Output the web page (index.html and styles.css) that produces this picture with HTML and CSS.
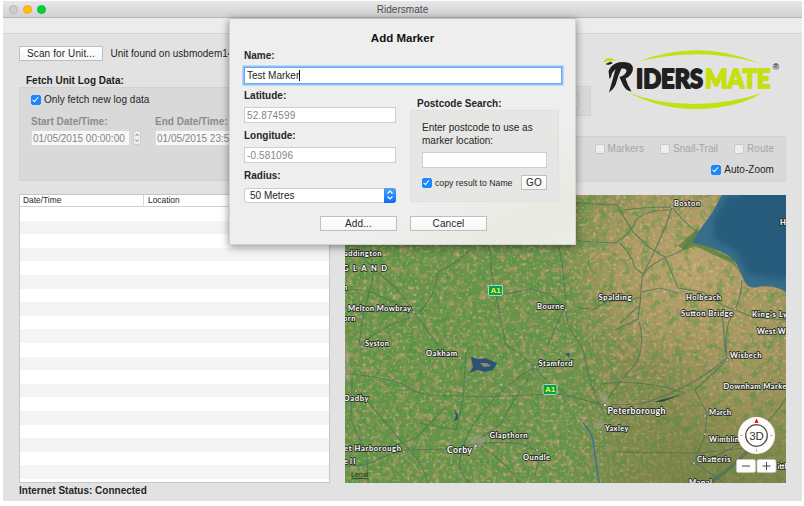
FILE: index.html
```html
<!DOCTYPE html>
<html lang="en">
<head>
<meta charset="utf-8">
<title>Ridersmate</title>
<link rel="stylesheet" href="styles.css">
</head>
<body>
<div class="window">
  <header class="titlebar">
    <div class="lights"><i class="light"></i><i class="light amber"></i><i class="light green"></i></div>
    <span>Ridersmate</span>
  </header>
  <div class="toolbar"></div>
  <main class="content">
    <section class="left">
      <div class="scan"><button class="btn scan-btn">Scan for Unit...</button><span>Unit found on usbmodem1411</span></div>
      <h2 class="group-title">Fetch Unit Log Data:</h2>
      <div class="panel fetch">
        <label class="check"><i class="box on"></i>Only fetch new log data</label>
        <div class="dates">
          <div class="date"><b>Start Date/Time:</b><div class="date-row"><span class="field">01/05/2015 00:00:00</span><i class="stepper"><svg viewBox="0 0 8 14"><path d="M1.500 5 3 3l1.500 2M1.500 8.500 3 10.500l1.500-2"/></svg></i></div></div>
          <div class="date"><b>End Date/Time:</b><div class="date-row"><span class="field">01/05/2015 23:59:59</span><i class="stepper"></i></div></div>
        </div>
      </div>
      <div class="table">
        <div class="thead"><span>Date/Time</span><span>Location</span></div>
        <div class="rows"></div>
      </div>
      <footer class="status">Internet Status: Connected</footer>
    </section>
    <section class="right">
      <div class="brand">
        <div class="panel mini"><i></i></div>
        <svg class="logo" viewBox="600 40 186 75">
          <g fill="#c4df12">
            <path d="M637 62Q698 38 759 63Q698 46 637 62Z"/>
            <path d="M628 92.500Q642 98 658 101Q710 110 762 93Q745 104 718 107.500Q670 114 628 92.500Z"/>
            <path d="M603.500 62.500Q604 59 608 58Q613 57.500 616 60.500Q610 60 603.500 62.500Z"/>
          </g>
          <g fill="#211f20">
            <path d="M605.500 64L611 61.500L612.500 63.500L608 65Z"/>
            <path d="M608.500 71Q611.500 64 619 62.300Q632 60.500 633 68Q633 75 625.500 78.500Q627.500 85 631.500 91.500Q625.500 90.500 623 85L619.500 77Q625.500 75.500 626.500 71Q626.500 68 621.500 68.500L618.500 75.500L615.500 85Q613.500 89.500 609 92.500Q611 85 612.500 80L615.500 69Q612 72 611 77L609.500 79Z"/>
          </g>
          <text class="word dark" x="636" y="87.500" textLength="67" lengthAdjust="spacingAndGlyphs">IDERS</text>
          <text class="word lime" x="705" y="87.500" textLength="65.500" lengthAdjust="spacingAndGlyphs">MATE</text>
          <text class="reg" x="772.800" y="69.500">®</text>
        </svg>
      </div>
      <div class="panel layers">
        <div class="layer-row off"><label class="check"><i class="box"></i>Markers</label><label class="check"><i class="box"></i>Snail-Trail</label><label class="check"><i class="box"></i>Route</label></div>
        <div class="layer-row"><label class="check"><i class="box on"></i>Auto-Zoom</label></div>
      </div>
      <svg class="map" viewBox="345 195 441 288">
        <defs>
          <linearGradient id="east" x1="345" x2="786" y1="340" y2="310" gradientUnits="userSpaceOnUse">
            <stop offset="0" stop-color="#669348"/><stop offset=".5" stop-color="#6b924b"/><stop offset=".62" stop-color="#838c51"/><stop offset="1" stop-color="#958f5a"/>
          </linearGradient>
          <linearGradient id="south" x1="0" x2="0" y1="0" y2="1">
            <stop offset=".5" stop-color="#6c7c3e" stop-opacity="0"/><stop offset="1" stop-color="#6c7c3e" stop-opacity=".6"/>
          </linearGradient>
          <linearGradient id="southfade"><stop offset="0" stop-color="#fff" stop-opacity="0"/><stop offset=".5" stop-color="#fff"/></linearGradient>
          <mask id="se"><rect x="570" y="195" width="216" height="288" fill="url(#southfade)"/></mask>
          <radialGradient id="fen"><stop offset="0" stop-color="#c3a772" stop-opacity=".9"/><stop offset=".6" stop-color="#b79f68" stop-opacity=".6"/><stop offset="1" stop-color="#b79c67" stop-opacity="0"/></radialGradient>
          <filter id="tan" x="0" y="0" width="1" height="1" color-interpolation-filters="sRGB"><feTurbulence type="fractalNoise" baseFrequency=".15" numOctaves="3" seed="8"/><feColorMatrix values="0 0 0 0 .75  0 0 0 0 .60  0 0 0 0 .42  4 0 0 0 -1.950"/></filter>
          <filter id="grass" x="0" y="0" width="1" height="1" color-interpolation-filters="sRGB"><feTurbulence type="fractalNoise" baseFrequency=".12" numOctaves="3" seed="21"/><feColorMatrix values="0 0 0 0 .28  0 0 0 0 .58  0 0 0 0 .25  0 4 0 0 -1.950"/></filter>
          <filter id="grain" x="0" y="0" width="1" height="1" color-interpolation-filters="sRGB"><feTurbulence type="fractalNoise" baseFrequency=".3" numOctaves="2" seed="4"/><feColorMatrix values="0 0 0 0 .86  0 0 0 0 .78  0 0 0 0 .60  0 0 4 0 -2.200"/></filter>
          <filter id="soft"><feGaussianBlur stdDeviation="3"/></filter>
        </defs>
        <rect x="345" y="195" width="441" height="288" fill="url(#east)"/>
        <ellipse cx="690" cy="265" rx="130" ry="115" fill="url(#fen)"/>
        <ellipse cx="745" cy="390" rx="80" ry="75" fill="url(#fen)" opacity=".6"/>
        <rect x="345" y="195" width="441" height="288" filter="url(#tan)" opacity=".6"/>
        <rect x="345" y="195" width="441" height="288" filter="url(#grass)" opacity=".5"/>
        <rect x="345" y="195" width="441" height="288" filter="url(#grain)" opacity=".5"/>
        <rect x="570" y="195" width="216" height="288" fill="url(#south)" mask="url(#se)"/>
        <path fill="#4c7b38" d="M678 246L697 229L704 241L717 251L733 259L739 271L732 263L714 255L696 246L684 250Z" opacity=".7"/>
        <path fill="#376e8b" d="M722 195L712 213L699 231L692 243Q707 245 719 251Q732 256 737 265L743 278Q747 290 758 287Q774 284 786 292V195Z"/>
        <path fill="#275b7b" d="M728 195L714 218L713 238L736 251L748 274L786 281V195Z" filter="url(#soft)"/>
        <path fill="#275b7b" d="M740 195H786V275L755 265L738 240Z"/>
        <g class="roads">
          <path d="M576 203L617 205L633 232L650 248L665 257L678 288L703 292L722 305L735 310L753 317L786 320"/>
          <path d="M623 210Q645 207 672 207Q667 225 655 250L642 277L640 305L620 323"/>
          <path d="M577 241L615 243Q633 232 636 220Q646 210 670 210"/>
          <path d="M672 207Q687 226 697 231M642 277Q650 262 675 254Q690 247 697 231"/>
          <path d="M642 292L660 288L678 293M735 310Q742 295 742 280M732 314Q724 330 726 355M722 314Q724 330 725 352"/>
          <path d="M620 243Q632 255 635 268L643 274M577 308L595 309Q605 299 627 301L640 297M640 303L638 319L615 330"/>
          <path d="M487 245Q492 250 491 270Q499 310 506 345Q519 352 535 367Q550 388 574 397L603 405"/>
          <path d="M470 250Q455 265 438 272Q435 298 416 315M363 258L398 290L416 315L438 345"/>
          <path d="M345 290Q360 288 375 294L414 311M375 265Q372 285 364 310L359 345M359 345Q385 325 410 318"/>
          <path d="M501 295L530 289L550 294L564 309L548 345"/>
          <path d="M345 374Q372 375 401 383Q415 394 431 395L485 397Q521 395 560 394L603 405"/>
          <path d="M352 380L351 420L367 455L368 483M360 392L400 440Q423 461 428 483"/>
          <path d="M535 367Q496 389 472 427Q462 443 459 465Q462 478 470 483M466 352L463 400L456 430L420 423"/>
          <path d="M345 466Q370 466 378 459L402 450L455 449Q490 438 525 445L537 451M380 450L416 438L445 408"/>
          <path d="M535 367Q515 398 500 425L480 438M480 445Q510 466 519 483M540 455L535 475"/>
          <path d="M558 245Q564 265 565 300L568 325L583 350L590 380Q596 400 604 413"/>
          <path d="M604 405L640 404Q690 390 727 358L726 345M600 384Q640 378 685 393"/>
          <path d="M727 360L695 390L707 413L705 436L694 462L724 483M786 398Q757 445 694 463"/>
          <path d="M618 452L700 453L745 448M639 322Q646 345 635 365Q620 380 607 400"/>
        </g>
        <g fill="#2c5374">
          <path d="M471 357L478 359L485 358L497 363L493 370L484 372L478 370L469 373L473 367Z"/><path fill="#8a8c69" d="M480 363L487 363L491 366L484 367Z"/>
          <path d="M454 410L458 414L458 419L454 422L456 416Z"/><path d="M565 354L570 353L569 357Z"/>
        </g>
        <path d="M583 423Q591 431 593 440L599 483" fill="none" stroke="#3f6f9c" stroke-width="1.500"/>
        <path d="M653 402L683 394L662 402Z" fill="#274d3c"/>
        <path d="M710 483Q733 467 752 447" fill="none" stroke="#426a5d" stroke-width="3.500" opacity=".6"/>
        <g fill="#a59f8b" opacity=".5"><path d="M468 437L480 434L486 440L480 448L470 444Z"/><path d="M593 425L602 418L604 423L600 429L594 429Z"/><path d="M598 390L607 395L610 405L604 408Z"/><path d="M345 340L349 350L350 382L345 378Z"/></g>
        <g class="dots">
          <circle cx="672" cy="207" r="1.200"/><circle cx="683" cy="293" r="1.200"/><circle cx="634" cy="301" r="1.200"/><circle cx="735" cy="309" r="1.200"/><circle cx="414" cy="312" r="1.200"/><circle cx="566" cy="310" r="1.200"/><circle cx="362" cy="347" r="1.200"/><circle cx="460" cy="358" r="1.200"/><circle cx="535" cy="367" r="1.200"/><circle cx="356" cy="391" r="1.200"/><circle cx="475.500" cy="446" r="1.500"/><circle cx="404" cy="452" r="1.200"/><circle cx="530" cy="440" r="1.200"/><circle cx="537" cy="450" r="1.200"/><circle cx="605" cy="405" r="1.500"/><circle cx="601" cy="432" r="1.200"/><circle cx="727" cy="360" r="1.200"/><circle cx="705" cy="416" r="1.200"/><circle cx="705" cy="434" r="1.200"/><circle cx="694" cy="463" r="1.200"/>
        </g>
        <g class="places">
          <text x="674" y="205.500" textLength="26">Boston</text>
          <text x="780" y="225">H</text>
          <text x="344" y="256" textLength="37.500">addington</text>
          <text x="343" y="271" textLength="44">GLAND</text>
          <text x="343" y="290">n</text>
          <text x="348" y="310.500" textLength="63">Melton Mowbray</text>
          <text x="343" y="321" textLength="12.500">orn</text>
          <text x="537" y="308.500" textLength="27">Bourne</text>
          <text x="598.500" y="299.500" textLength="33">Spalding</text>
          <text x="686" y="299.500" textLength="35">Holbeach</text>
          <text x="681" y="315.500" textLength="52">Sutton Bridge</text>
          <text x="752" y="316.500" textLength="35">King's Ly</text>
          <text x="757" y="334" textLength="31">West Wi</text>
          <text x="365" y="345.500" textLength="24">Syston</text>
          <text x="426" y="356" textLength="31">Oakham</text>
          <text x="538.500" y="366" textLength="34">Stamford</text>
          <text x="343.500" y="400.500" textLength="25">Oadby</text>
          <text x="344" y="450.500" textLength="57">et Harborough</text>
          <text x="344" y="464" textLength="11.500">ell</text>
          <text class="town" x="447" y="452.500" textLength="25">Corby</text>
          <text x="489.500" y="438" textLength="38">Glapthorn</text>
          <text x="523" y="459.500" textLength="27">Oundle</text>
          <text class="town" x="607.500" y="413.500" textLength="58">Peterborough</text>
          <text x="605" y="431" textLength="23.500">Yaxley</text>
          <text x="730" y="358" textLength="31.500">Wisbech</text>
          <text x="723.500" y="389" textLength="63">Downham Marke</text>
          <text x="709" y="414.500" textLength="22">March</text>
          <text x="709" y="442" textLength="30">Wimblin</text>
          <text x="697" y="461.500" textLength="33.500">Chatteris</text>
          <text x="689" y="485" textLength="23">Manal</text>
          <text x="777.500" y="469" textLength="9">ittl</text>
        </g>
        <text class="legal" x="351" y="477">Legal</text>
        <g class="shield"><rect x="488.500" y="285.500" width="14" height="10" rx="1.500"/><text x="495.500" y="293.300">A1</text><rect x="543" y="384.500" width="14" height="10" rx="1.500"/><text x="550" y="392.300">A1</text></g>
        <g class="compass">
          <circle cx="756.500" cy="435.500" r="18.500" fill="#fdfdfd"/><circle cx="756.500" cy="435.500" r="10.800" fill="#fff" stroke="#554f42" stroke-width="1.300"/>
          <path d="M756.500 418.300L758.500 423H754.500Z" fill="#f00d12"/><path d="M740 435.500H743M770 435.500H773M756.500 449V452" stroke="#bbb"/>
          <text x="756.500" y="439.500">3D</text>
        </g>
        <g class="zoom"><rect x="736.500" y="459.500" width="19" height="13" rx="1.800"/><rect x="757" y="459.500" width="19" height="13" rx="1.800"/><path d="M742 466H750M762.500 466H770.500M766.500 462V470"/></g>
      </svg>
    </section>
  </main>
  <div class="sheet">
    <h1>Add Marker</h1>
    <b>Name:</b>
    <div class="input focus">Test Marker<i class="caret"></i></div>
    <div class="cols">
      <div class="coords">
        <b>Latitude:</b><div class="input dim">52.874599</div>
        <b>Longitude:</b><div class="input dim">-0.581096</div>
        <b>Radius:</b>
        <div class="select">50 Metres<i><svg viewBox="0 0 12 14"><path d="M3.500 5.500 6 3l2.500 2.500M3.500 8.500 6 11l2.500-2.500"/></svg></i></div>
      </div>
      <div class="search">
        <b>Postcode Search:</b>
        <div class="search-box">
          <p>Enter postcode to use as marker location:</p>
          <div class="input"></div>
          <div class="go-row"><label class="check small"><i class="box on"></i>copy result to Name</label><button class="btn go">GO</button></div>
        </div>
      </div>
    </div>
    <div class="actions"><button class="btn">Add...</button><button class="btn">Cancel</button></div>
  </div>
</div>
</body>
</html>
```
FILE: styles.css
```css
* { box-sizing: border-box; }
body { margin: 0; background: #fff; font: 10px/12px "Liberation Sans", Arial, sans-serif; color: #262626; overflow: hidden; }
h1, h2, p { margin: 0; }
i { font-style: normal; display: block; flex: none; }
.window { position: relative; width: 799px; height: 500px; margin: 1px 0 0 3px; background: #e2e2e2; display: flex; flex-direction: column; overflow: hidden; }
.titlebar { position: relative; height: 17px; flex: none; background: linear-gradient(#e9e6e9, #d2d0d2); border-bottom: 1px solid #b8b6b8; display: flex; justify-content: center; align-items: center; color: #4a4a4a; letter-spacing: .05px; padding-top: 2px; }
.lights { position: absolute; left: 6px; top: 4px; display: flex; gap: 5px; }
.light { width: 9px; height: 9px; border-radius: 50%; background: #cfcccf; border: 1px solid #bbb8bb; }
.amber { background: #ffbd0a; border-color: #f0ae12; }
.green { background: #04d03c; border-color: #08bd37; }
.toolbar { height: 16px; flex: none; background: #ececec; border-bottom: 1px solid #d4d4d4; }
.content { flex: 1; display: flex; gap: 15px; padding: 12px 16px 0; }
.left { width: 311px; display: flex; flex-direction: column; }
.right { width: 441px; display: flex; flex-direction: column; }
.btn { font: 10px/12px "Liberation Sans", Arial, sans-serif; letter-spacing: .12px; color: #262626; background: linear-gradient(#fff, #f6f6f6); border: 1px solid #bfbfbf; border-radius: 0; padding: 0; text-align: center; }
.scan { display: flex; align-items: center; gap: 7.500px; height: 15px; white-space: nowrap; }
.scan-btn { width: 84px; height: 15px; }
.group-title { font-size: 10px; line-height: 12px; margin: 14px 0 0 7px; color: #1d1d1d; }
.panel { background: #d9d9d9; border: 1px solid #d2d2d2; }
.fetch { height: 94px; padding: 6px 0 0 11px; overflow: hidden; }
.check { display: flex; align-items: center; gap: 3px; white-space: nowrap; letter-spacing: .04px; }
.box { width: 10px; height: 10px; border-radius: 2px; background: #eee; border: 1px solid #c9c9c9; }
.box.on { background: #1d86fb; border-color: #1d86fb; position: relative; }
.box.on::after { content: ""; position: absolute; left: 2.200px; top: 0; width: 2px; height: 4.500px; border: solid #fff; border-width: 0 1.300px 1.300px 0; transform: rotate(40deg); }
.dates { display: flex; gap: 14px; margin-top: 10px; color: #858585; }
.date { width: 110px; flex: none; }
.date b { display: block; height: 14px; color: #8b8b8b; }
.date-row { display: flex; gap: 3px; }
.field { width: 100px; height: 16px; line-height: 15px; background: #f7f7f7; border: 1px solid #ddd; padding-left: 1px; white-space: nowrap; }
.stepper { width: 8px; height: 15px; background: #eee; border: 1px solid #ccc; border-radius: 3px; }
.stepper svg { display: block; width: 8px; height: 14px; fill: none; stroke: #888; stroke-width: .9px; }
.table { height: 289px; margin-top: 13px; border: 1px solid #c6c6c6; background: #fff; flex: none; display: flex; flex-direction: column; }
.thead { display: flex; height: 12px; border-bottom: 1px solid #d2d2d2; font-size: 8.400px; line-height: 11px; }
.thead span { width: 123px; padding-left: 3px; }
.thead span + span { border-left: 1px solid #d8d8d8; padding-left: 4px; }
.rows { flex: 1; background: repeating-linear-gradient(#fff 0 13.600px, #f4f4f4 13.600px 27.200px); }
.status { font-weight: bold; margin-top: 2px; }
.brand { height: 90px; display: flex; align-items: flex-start; }
.mini { width: 246px; height: 30px; margin-top: 40px; padding: 7px 11px 0; }
.mini i { height: 15px; background: #dedede; border: 1px solid #cbcbcb; }
.logo { width: 186px; height: 75px; margin: -6px 0 0 9px; flex: none; }
.word { font: 900 26px Lato, sans-serif; stroke-width: 1.800px; stroke-linejoin: round; }
.dark { fill: #211f20; stroke: #211f20; }
.lime { fill: #c4df12; stroke: #c4df12; }
.reg { font: bold 8.500px "Liberation Sans", sans-serif; fill: #333; }
.layers { height: 46px; padding: 6px 11px 0; display: flex; flex-direction: column; gap: 9px; }
.layer-row { display: flex; justify-content: flex-end; gap: 16px; height: 12px; }
.off { color: #a5a5a5; }
.map { display: block; width: 441px; height: 288px; margin-top: 13px; }
.roads { fill: none; stroke: #4d7457; stroke-width: 1.200px; opacity: .75; }
.dots { fill: #f5f5ee; stroke: #4a4f45; stroke-width: .6px; }
.places { font: 700 7.600px Lato, sans-serif; fill: #fff; stroke: #30352c; stroke-width: 1.800px; paint-order: stroke; stroke-linejoin: round; }
.town { font-size: 8.800px; }
.legal { font: 7px "Liberation Sans", sans-serif; fill: #29351f; text-decoration: underline; }
.shield rect { fill: #049e54; stroke: #a9d8b4; }
.shield text { font: bold 8px "Liberation Sans", sans-serif; fill: #ffef19; text-anchor: middle; }
.compass text { font: 11.500px "Liberation Sans", sans-serif; fill: #333; text-anchor: middle; }
.zoom rect { fill: #fcfcfc; stroke: #c9c9c0; stroke-width: .6px; }
.zoom path { stroke: #484848; fill: none; }
.sheet { position: absolute; left: 226px; top: 17px; width: 347px; height: 227px; padding: 13px 14px 0 14px; background: linear-gradient(150deg, #eee 70%, #e8eadf 90%, #ecede8); border: 1px solid #d2d2d2; border-top-color: #c1c1c1; box-shadow: 0 2px 8px rgba(0, 0, 0, .45); display: flex; flex-direction: column; }
.sheet h1 { font-size: 11.500px; line-height: 12px; text-align: center; color: #111; }
.sheet b { display: block; height: 12px; }
.sheet > b { margin-top: 6px; }
.input { height: 16px; background: #fff; border: 1px solid #cfcfcf; padding-left: 2px; line-height: 15px; display: flex; align-items: center; }
.focus { height: 17px; margin: 5px -1px 0 0; border-color: #6aa9ee; box-shadow: 0 0 0 1.500px #8dc0f8; }
.caret { width: 1px; height: 11px; background: #111; }
.cols { display: flex; gap: 15px; margin-top: 6px; height: 112px; }
.coords { width: 152px; }
.coords .input { margin: 5px 0 7px; height: 16px; }
.coords .input.dim { color: #858585; letter-spacing: .12px; }
.select { margin-top: 6px; height: 15px; background: #fff; border: 1px solid #ccc; border-radius: 3px; padding-left: 5px; display: flex; justify-content: space-between; align-items: center; }
.select i { width: 12px; height: 15px; margin-right: -1px; border-radius: 0 3px 3px 0; background: linear-gradient(#4aa2fb, #0a6cf8); }
.select svg { display: block; fill: none; stroke: #fff; stroke-width: 1.200px; }
.search { width: 149px; margin-left: -1px; padding-top: 8px; }
.search b { padding-left: 7px; }
.search-box { height: 92px; background: #e6e6e4; border: 1px solid #e0e0df; padding: 11px 11px 0 11px; }
.search-box p { line-height: 12.500px; width: 116px; }
.search-box .input { margin-top: 5px; }
.go-row { display: flex; justify-content: space-between; align-items: center; margin-top: 7px; }
.small { font-size: 8.650px; }
.go { width: 26px; height: 15px; }
.actions { display: flex; gap: 13px; margin: 14px 0 0 76px; }
.actions .btn { width: 77px; height: 15px; }
```
